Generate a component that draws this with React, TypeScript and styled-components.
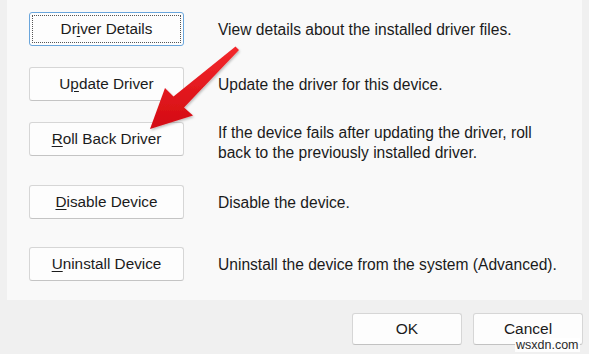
import React from "react";
import styled, { createGlobalStyle } from "styled-components";

const Global = createGlobalStyle`
  html, body { margin: 0; padding: 0; background: #f0f0f0; }
  body { font-family: "Liberation Sans", Arial, sans-serif; }
`;

const Page = styled.div`
  position: relative;
  width: 589px;
  height: 354px;
  overflow: hidden;
  background: #f0f0f0;
  display: flex;
  flex-direction: column;
`;

const Panel = styled.div`
  margin-left: 7px;
  width: 575px;
  height: 300px;
  box-sizing: border-box;
  background: #f9f9f9;
  padding-left: 22px;
  display: flex;
  flex-direction: column;
`;

const Row = styled.div<{ $top: number }>`
  display: grid;
  grid-template-columns: 155px 1fr;
  column-gap: 34px;
  align-items: start;
  margin-top: ${(p) => p.$top}px;
`;

const ActionButton = styled.button<{ $focused?: boolean }>`
  position: relative;
  height: 34px;
  width: 155px;
  box-sizing: border-box;
  background: #fdfdfd;
  border: 1px solid ${(p) => (p.$focused ? "#6aa6dc" : "#d6d6d6")};
  border-bottom-color: ${(p) => (p.$focused ? "#6aa6dc" : "#c4c4c4")};
  border-radius: 3px;
  font-family: "Liberation Sans", Arial, sans-serif;
  font-size: 15.3px;
  color: #1b1b1b;
  padding: 0;
  cursor: default;
  &::after {
    content: "";
    display: ${(p) => (p.$focused ? "block" : "none")};
    position: absolute;
    inset: 2px;
    border: 1px dotted #555;
  }
  u { text-decoration-thickness: 1px; text-underline-offset: 2px; }
`;

const Description = styled.div`
  min-height: 34px;
  display: flex;
  align-items: center;
  font-size: 15.6px;
  line-height: 20px;
  color: #1b1b1b;
  padding-top: 1px;
  box-sizing: border-box;
`;

const Footer = styled.div`
  display: flex;
  justify-content: flex-end;
  gap: 11px;
  padding: 13px 6px 0 0;
`;

const DialogButton = styled.button`
  height: 32px;
  width: 110px;
  box-sizing: border-box;
  background: #fdfdfd;
  border: 1px solid #d6d6d6;
  border-bottom-color: #c2c2c2;
  border-radius: 3px;
  font-family: "Liberation Sans", Arial, sans-serif;
  font-size: 15.5px;
  color: #1b1b1b;
  padding: 0;
`;

const Arrow = styled.svg`
  position: absolute;
  left: 0;
  top: 0;
  pointer-events: none;
`;

const Watermark = styled.span`
  position: absolute;
  left: 515px;
  top: 338px;
  font-family: "Liberation Sans", Arial, sans-serif;
  font-size: 12.5px;
  color: #2a2a2a;
  background: rgba(255, 255, 255, 0.85);
  line-height: 14px;
  padding: 0 1px;
`;

const rows = [
  { top: 12, focused: true, label: <>Dr<u>i</u>ver Details</>, desc: "View details about the installed driver files." },
  { top: 21, label: <>U<u>p</u>date Driver</>, desc: "Update the driver for this device." },
  { top: 21, label: <><u>R</u>oll Back Driver</>, desc: <>If the device fails after updating the driver, roll<br />back to the previously installed driver.</> },
  { top: 22, label: <><u>D</u>isable Device</>, desc: "Disable the device." },
  { top: 28, label: <><u>U</u>ninstall Device</>, desc: "Uninstall the device from the system (Advanced)." },
];

export default function App() {
  return (
    <>
      <Global />
      <Page>
        <Panel>
          {rows.map((r, i) => (
            <Row key={i} $top={r.top}>
              <ActionButton $focused={r.focused}>{r.label}</ActionButton>
              <Description>{r.desc}</Description>
            </Row>
          ))}
        </Panel>
        <Footer>
          <DialogButton>OK</DialogButton>
          <DialogButton>Cancel</DialogButton>
        </Footer>
        <Arrow width="589" height="354" viewBox="0 0 589 354">
          <defs>
            <linearGradient id="ag" x1="0" y1="0" x2="0" y2="1">
              <stop offset="0" stopColor="#f3282c" />
              <stop offset="1" stopColor="#d30b12" />
            </linearGradient>
            <filter id="sh" x="-20%" y="-20%" width="140%" height="140%">
              <feDropShadow dx="1" dy="1.5" stdDeviation="1.2" floodColor="#000" floodOpacity="0.25" />
            </filter>
          </defs>
          <polygon
            points="235.5,46.5 173.5,96.5 165,88 150,129 193,115.5 184,107.5 239,50"
            fill="url(#ag)"
            filter="url(#sh)"
            strokeLinejoin="round"
          />
        </Arrow>
        <Watermark>wsxdn.com</Watermark>
      </Page>
    </>
  );
}
